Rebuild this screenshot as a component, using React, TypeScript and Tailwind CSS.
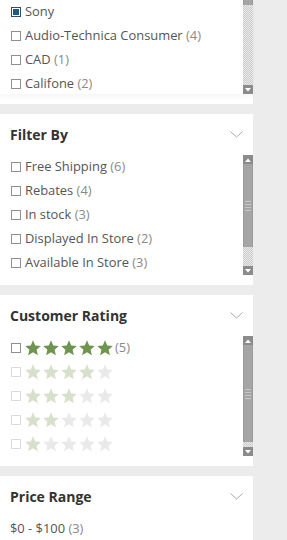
import React from "react";

type Item = { label: string; count?: number; checked?: boolean };

const brands: Item[] = [
  { label: "Sony", checked: true },
  { label: "Audio-Technica Consumer", count: 4 },
  { label: "CAD", count: 1 },
  { label: "Califone", count: 2 },
];

const filters: Item[] = [
  { label: "Free Shipping", count: 6 },
  { label: "Rebates", count: 4 },
  { label: "In stock", count: 3 },
  { label: "Displayed In Store", count: 2 },
  { label: "Available In Store", count: 3 },
];

const STAR = "M12 1.8l3 6.9 7.4.7-5.6 4.9 1.7 7.3L12 17.8l-6.5 3.8 1.7-7.3-5.6-4.9 7.4-.7z";

function Star({ color }: { color: string }) {
  return (
    <svg viewBox="0 0 24 24" className="w-[18px] h-[18px]">
      <path d={STAR} fill={color} />
    </svg>
  );
}

function Chevron() {
  return (
    <svg width="13" height="7" viewBox="0 0 13 7" className="block">
      <path d="M0.5 0.5L6.5 6L12.5 0.5" fill="none" stroke="#a8a8a8" strokeWidth="1" />
    </svg>
  );
}

function Checkbox({ checked, faded }: { checked?: boolean; faded?: boolean }) {
  if (checked) {
    return (
      <span className="w-[10px] h-[10px] border border-[#3b4a5a] p-[1px] shrink-0">
        <span className="block w-full h-full bg-[#1d5a8c]" />
      </span>
    );
  }
  return (
    <span
      className={
        faded
          ? "w-[10px] h-[10px] border border-[#dcdcdc] shrink-0"
          : "w-[10px] h-[10px] border border-[#8f8f8f] shrink-0"
      }
    />
  );
}

function Row({ item }: { item: Item }) {
  return (
    <div className="h-6 flex items-center gap-[4px] pl-[11px] text-[12.9px] text-[#555] whitespace-nowrap">
      <Checkbox checked={item.checked} />
      <span>
        {item.label}
        {item.count !== undefined && <span className="text-[#8a8a8a]"> ({item.count})</span>}
      </span>
    </div>
  );
}

function ArrowButton({ up }: { up?: boolean }) {
  return (
    <div className="h-[9px] bg-[#8b8b8b] flex items-center justify-center">
      <svg width="6" height="4" viewBox="0 0 6 4">
        <path d={up ? "M0 4L3 0.5L6 4z" : "M0 0L3 3.5L6 0z"} fill="#fff" />
      </svg>
    </div>
  );
}

function Track({ h }: { h: number }) {
  return (
    <div
      className="bg-[repeating-conic-gradient(#cdcdcd_0%_25%,#e8e8e8_0%_50%)] bg-[length:2px_2px]"
      style={{ height: h }}
    />
  );
}

function Thumb({ h, grip = true }: { h: number; grip?: boolean }) {
  return (
    <div
      className="bg-[#a5a5a5] border-x border-[#9a9a9a] flex flex-col items-center justify-center gap-[2px]"
      style={{ height: h }}
    >
      {grip && (
        <>
          <span className="block w-[6px] h-px bg-[#c8c8c8]" />
          <span className="block w-[6px] h-px bg-[#c8c8c8]" />
          <span className="block w-[6px] h-px bg-[#c8c8c8]" />
          <span className="block w-[6px] h-px bg-[#c8c8c8]" />
        </>
      )}
    </div>
  );
}

function Scrollbar({ thumb, track }: { thumb: number; track: number }) {
  return (
    <div className="w-[10px] flex flex-col shrink-0">
      <ArrowButton up />
      <Thumb h={thumb} />
      <Track h={track} />
      <ArrowButton />
    </div>
  );
}

function Header({ title }: { title: string }) {
  return (
    <div className="h-[41px] flex items-center justify-between pl-[10px] pr-[10px]">
      <h2 className="text-[14px] font-bold text-[#333]">{title}</h2>
      <Chevron />
    </div>
  );
}

function Panel({ children }: { children: React.ReactNode }) {
  return <section className="bg-white pb-[10px]">{children}</section>;
}

function RatingRow({ filled, first }: { filled: number; first?: boolean }) {
  const on = first ? "#6f9450" : "#d8dfca";
  return (
    <div className="h-6 flex items-center pl-[11px]">
      <Checkbox faded={!first} />
      <div className="flex ml-[3px]">
        {[0, 1, 2, 3, 4].map((i) => (
          <Star key={i} color={i < filled ? on : "#e9e9e9"} />
        ))}
      </div>
      {first && <span className="ml-[1px] text-[12.9px] text-[#8a8a8a]">(5)</span>}
    </div>
  );
}

export default function App() {
  return (
    <div
      className="w-[287px] h-[540px] overflow-hidden bg-[#ececec]"
      style={{ fontFamily: "'Open Sans', 'Noto Sans', sans-serif" }}
    >
      <div className="w-[253px] flex flex-col gap-[10px]">
        {/* Brand list, scrolled to the bottom */}
        <Panel>
          <div className="h-[94px] flex shadow-[0_3px_4px_rgba(0,0,0,0.04)]">
            <div className="flex-1">
              {brands.map((b) => (
                <Row key={b.label} item={b} />
              ))}
            </div>
            <div className="w-[10px] flex flex-col shrink-0">
              <Thumb h={5} grip={false} />
              <Track h={80} />
              <ArrowButton />
            </div>
          </div>
        </Panel>

        <Panel>
          <Header title="Filter By" />
          <div className="h-[120px] flex">
            <div className="flex-1">
              {filters.map((f) => (
                <Row key={f.label} item={f} />
              ))}
            </div>
            <Scrollbar thumb={83} track={19} />
          </div>
        </Panel>

        <Panel>
          <Header title="Customer Rating" />
          <div className="h-[120px] flex">
            <div className="flex-1">
              <RatingRow filled={5} first />
              <RatingRow filled={4} />
              <RatingRow filled={3} />
              <RatingRow filled={2} />
              <RatingRow filled={1} />
            </div>
            <Scrollbar thumb={97} track={5} />
          </div>
        </Panel>

        <Panel>
          <Header title="Price Range" />
          <div className="h-6 flex items-center pl-[10px] text-[12.9px] text-[#555]">
            $0 - $100<span className="text-[#8a8a8a]">&nbsp;(3)</span>
          </div>
        </Panel>
      </div>
    </div>
  );
}
